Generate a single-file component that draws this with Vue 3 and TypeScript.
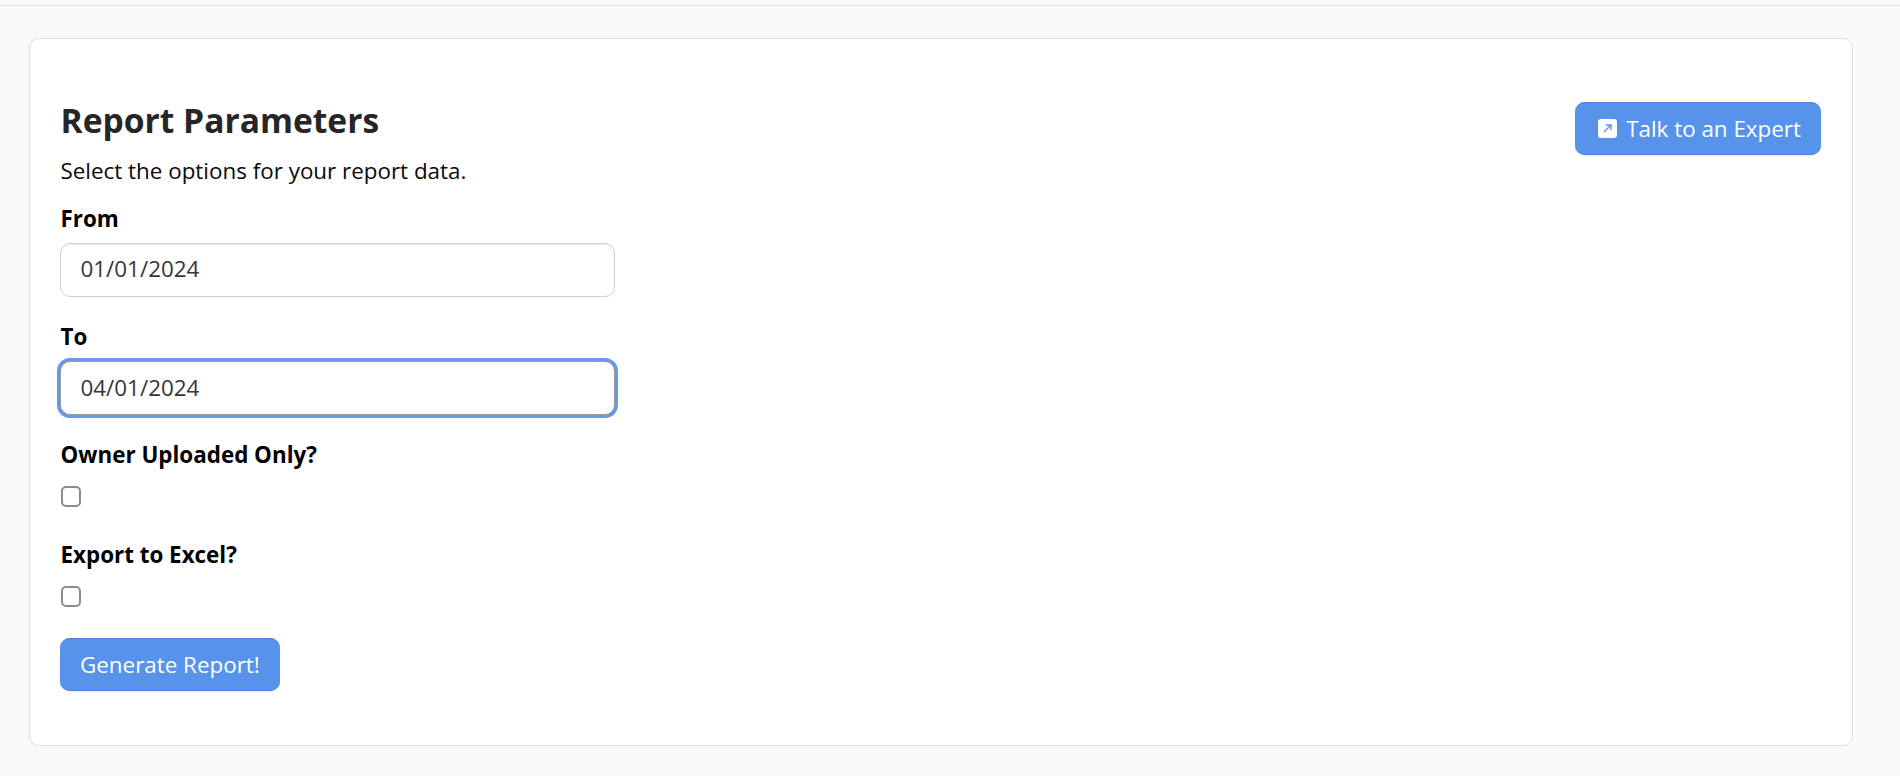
<script setup lang="ts">
const title = 'Report Parameters'
</script>

<template>
  <div class="page">
    <div class="topbar"></div>
    <main class="main">
      <section class="card">
        <div class="head">
          <div class="intro">
            <h1 class="title">{{ title }}</h1>
            <p class="sub">Select the options for your report data.</p>
          </div>
          <button class="btn expert" type="button">
            <svg class="ico" viewBox="0 0 19 19" width="19" height="19" aria-hidden="true">
              <rect width="19" height="19" rx="3" fill="#fff" />
              <path d="M6 13 12.5 6.5M8 6h5v5" fill="none" stroke="#5a94ec" stroke-width="1.4" />
            </svg>
            Talk to an Expert
          </button>
        </div>
        <div class="field first">
          <label class="label">From</label>
          <input class="input nudge" type="text" value="01/01/2024" />
        </div>
        <div class="field tight">
          <label class="label">To</label>
          <input class="input focus" type="text" value="04/01/2024" />
        </div>
        <div class="field boxed">
          <label class="label">Owner Uploaded Only?</label>
          <input class="check" type="checkbox" />
        </div>
        <div class="field boxed">
          <label class="label">Export to Excel?</label>
          <input class="check" type="checkbox" />
        </div>
        <button class="btn generate" type="button">Generate Report!</button>
      </section>
    </main>
  </div>
</template>

<style>
html, body { margin: 0; background: #fafafa; }
</style>

<style scoped>
.page {
  min-height: 776px;
  background: #fafafa;
  font-family: "Open Sans", sans-serif;
  box-sizing: border-box;
}
.topbar {
  height: 5px;
  border-bottom: 1px solid #e0e0e0;
  background: #fafafa;
}
.main { padding: 32px 47px 0 29px; }
.card {
  box-sizing: border-box;
  height: 708px;
  background: #fff;
  border: 1px solid #dedede;
  border-radius: 10px;
  padding: 59px 31px 0 30px;
}
.head { display: flex; justify-content: space-between; align-items: flex-start; }
.title {
  margin: 0 0 0 .5px;
  font-size: 33.6px;
  line-height: 44px;
  font-weight: 700;
  color: #262626;
}
.sub {
  margin: 14px 0 0 .5px;
  font-size: 22.4px;
  line-height: 30px;
  color: #0a0a0a;
}
.expert { margin-top: 4px; padding-bottom: 8px; }
.btn {
  box-sizing: border-box;
  display: inline-flex;
  align-items: center;
  height: 53px;
  padding: 0 20px;
  border: 0;
  border-radius: 10px;
  background: #5793eb;
  box-shadow: inset 0 -1px 0 #4b85dd, inset 0 1px 0 #4b85dd, 0 1px 2px rgba(0,0,0,.08);
  color: #fff;
  font-family: inherit;
  font-size: 22.4px;
}
.ico { margin: 0 9px 1px 3px; }
.field { margin-top: 25.5px; }
.field.first { margin-top: 18px; }
.field.tight { margin-top: 24.5px; }
.field.boxed { padding-bottom: 7px; }
.label {
  display: block;
  margin-left: .5px;
  font-size: 22.4px;
  line-height: 30px;
  font-weight: 700;
  color: #000;
  margin-bottom: 9px;
}
.input {
  box-sizing: border-box;
  display: block;
  width: 554.5px;
  height: 54px;
  padding: 0 20px 0 19.5px;
  border: 1px solid #cfcfcf;
  border-radius: 10px;
  background: #fff;
  color: #363636;
  font-family: inherit;
  font-size: 22.4px;
  box-shadow: inset 0 1px 1px rgba(0,0,0,.06);
  outline: none;
}
.nudge { padding-bottom: 3px; }
.focus { border-color: #9a9a9a; box-shadow: 0 0 0 3px #6698ee; }
.check {
  appearance: none;
  display: block;
  box-sizing: border-box;
  width: 20px;
  height: 21px;
  margin: 16px 0 0 .5px;
  border: 2px solid #8c8c8c;
  border-radius: 5px;
  background: #fff;
}
.generate { margin-top: 24.5px; }
</style>
